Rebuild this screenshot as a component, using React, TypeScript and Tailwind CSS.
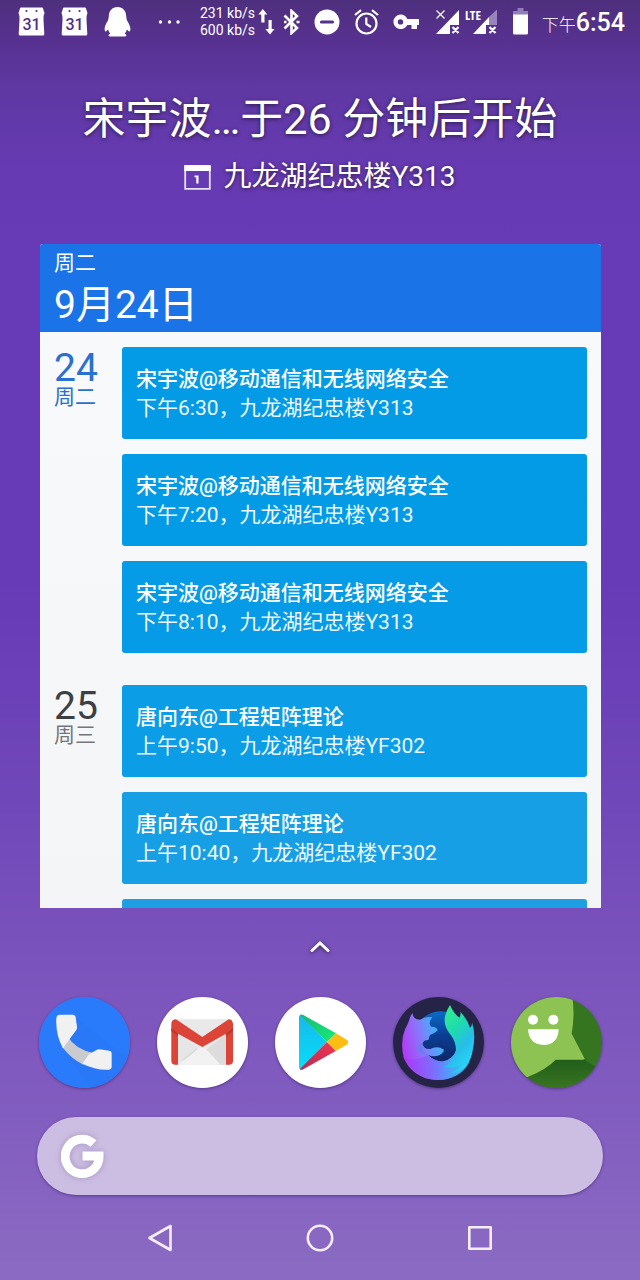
import React from "react";

type Event = { title?: string; detail?: string; color: string };
type Day = { day: string; weekday: string; dayColor: string; weekdayColor: string; events: Event[] };

const days: Day[] = [
  {
    day: "24",
    weekday: "周二",
    dayColor: "text-[#2a70cf]",
    weekdayColor: "text-[#2a70cf]",
    events: [
      { title: "宋宇波@移动通信和无线网络安全", detail: "下午6:30，九龙湖纪忠楼Y313", color: "bg-[#049be6]" },
      { title: "宋宇波@移动通信和无线网络安全", detail: "下午7:20，九龙湖纪忠楼Y313", color: "bg-[#049be6]" },
      { title: "宋宇波@移动通信和无线网络安全", detail: "下午8:10，九龙湖纪忠楼Y313", color: "bg-[#059be6]" },
    ],
  },
  {
    day: "25",
    weekday: "周三",
    dayColor: "text-[#3c4043]",
    weekdayColor: "text-[#757679]",
    events: [
      { title: "唐向东@工程矩阵理论", detail: "上午9:50，九龙湖纪忠楼YF302", color: "bg-[#0b9de6]" },
      { title: "唐向东@工程矩阵理论", detail: "上午10:40，九龙湖纪忠楼YF302", color: "bg-[#169fe4]" },
      { color: "bg-[#1f9fe3]" },
    ],
  },
];

function CalendarBadge() {
  return (
    <svg className="h-[29px] w-[27px]" viewBox="0 0 27 29" aria-hidden="true">
      <path
        d="M2 1.5Q2 .5 3 .5H24Q25 .5 25 1.5L26.500 6Q25 9 25.500 13L26.300 27Q26.300 28.500 25 28.500H2Q.7 28.500.7 27L1.500 13Q2 9 .5 6Z"
        fill="#fff"
      />
      <circle cx="8.500" cy="4" r="1.100" fill="#51308a" />
      <circle cx="18.500" cy="4" r="1.100" fill="#51308a" />
      <text x="13.500" y="22.500" textAnchor="middle" fontSize="16" fontWeight="500" fontFamily="Roboto, sans-serif" fill="#51308a">
        31
      </text>
    </svg>
  );
}

function StatusBar() {
  return (
    <header className="flex h-[45px] shrink-0 items-center justify-between pr-[15px] pb-[2px] pl-[18px]">
      <div className="flex items-center">
        <div className="flex items-center gap-4">
          <CalendarBadge />
          <CalendarBadge />
          <svg className="h-[30px] w-[27px]" viewBox="0 0 27 30" fill="#fff" aria-hidden="true">
            <path d="M13.500 0C8 0 5 4 4.800 9C4.700 11 4.300 12 4 13.500C2 16.500.6 19.500.6 22C.6 24 1.200 25 2.200 24.300L4.200 22.500C4.600 24.500 5.400 25.500 6.300 26.600C4.500 27.500 3.800 29.500 6 29.500H21C23.200 29.500 22.500 27.500 20.700 26.600C21.600 25.500 22.400 24.500 22.800 22.500L24.800 24.300C25.800 25 26.400 24 26.400 22C26.400 19.500 25 16.500 23 13.500C22.700 12 22.300 11 22.200 9C22 4 19 0 13.500 0Z" />
          </svg>
        </div>
        <svg className="ml-[27px] h-1 w-[22px]" viewBox="0 0 22 4" fill="#fff" aria-hidden="true">
          <circle cx="2.500" cy="2" r="1.700" />
          <circle cx="11.500" cy="2" r="1.700" />
          <circle cx="20" cy="2" r="1.700" />
        </svg>
        <div className="ml-5 text-[14px] leading-[17px] whitespace-nowrap">
          <p>231 kb/s</p>
          <p>600 kb/s</p>
        </div>
        <svg className="ml-[3px] h-[26px] w-[17px]" viewBox="0 0 17 26" fill="#fff" aria-hidden="true">
          <path d="M4.800 0L9.300 5.500H6.500V13.500H3.300V5.500H.3ZM12 25.500L7.300 20H10.500V11H13.700V20H16.500Z" />
        </svg>
      </div>
      <div className="flex items-center gap-[14px]">
        <svg className="h-[26px] w-[17px]" viewBox="0 0 17 26" fill="none" stroke="#fff" strokeWidth="2.600" aria-hidden="true">
          <path d="M1.500 6.500L14 19L8.500 24V2L14 7L1.500 19.500" />
          <path d="M13.500 13H16.500M1 13H3.500" />
        </svg>
        <svg className="h-[26px] w-[26px]" viewBox="0 0 26 26" aria-hidden="true">
          <circle cx="13" cy="13" r="12.500" fill="#fff" />
          <path d="M7.500 13H18.500" stroke="#55318d" strokeWidth="3.200" strokeLinecap="round" />
        </svg>
        <svg className="h-[26px] w-[25px]" viewBox="0 0 25 26" fill="none" stroke="#fff" strokeWidth="2.200" aria-hidden="true">
          <circle cx="12.500" cy="14.500" r="10" />
          <path d="M12.300 8.500V15L17 18M1 6L7 1.200M24 6L18 1.200" />
        </svg>
        <svg className="h-[26px] w-[27px]" viewBox="0 0 27 26" fill="#fff" fillRule="evenodd" aria-hidden="true">
          <path d="M7.500 5.500A7.300 7.300 0 0 1 14.300 10H26V16H24V20H18.500V16H14.300A7.300 7.300 0 1 1 7.500 5.500ZM7.500 10.200A2.700 2.700 0 1 0 7.500 15.600A2.700 2.700 0 1 0 7.500 10.200Z" />
        </svg>
        <svg className="h-[36px] w-[65px]" viewBox="435 4 65 36" aria-hidden="true">
          <path d="M437 34L460 10V25H451V34ZM474 34L490 17V25H487V34Z" fill="#fff" />
          <path d="M490 17L498 9.500V25H490Z" fill="#9883bd" />
          <path d="M437.500 10.500L445.500 18.500M445.500 10.500L437.500 18.500" stroke="#fff" strokeWidth="1.200" />
          <path d="M453.500 27L459.500 33M459.500 27L453.500 33M490.500 27L496.500 33M496.500 27L490.500 33" stroke="#fff" strokeWidth="2.200" />
          <text x="466" y="19.500" fontSize="13" fontWeight="700" fontFamily="'Open Sans Condensed', 'Roboto Condensed', 'Liberation Sans Narrow', Roboto, sans-serif" fill="#fff">
            LTE
          </text>
        </svg>
        <svg className="h-[27px] w-[15px]" viewBox="0 0 15 27" aria-hidden="true">
          <path d="M4.500 0H10.500V3H15V7H0V3H4.500Z" fill="#9180b5" />
          <path d="M0 6.500H15V25Q15 26.500 13.500 26.500H1.500Q0 26.500 0 25Z" fill="#fff" />
        </svg>
        <time className="flex items-baseline pt-1 whitespace-nowrap">
          <span className="text-[17px] leading-[30px] font-light">下午</span>
          <span className="text-[25px] leading-[30px] font-medium">6:54</span>
        </time>
      </div>
    </header>
  );
}

function Glance() {
  return (
    <section className="flex shrink-0 flex-col items-center gap-[10px] pt-[46px] pb-[47px] [text-shadow:0_1px_4px_rgba(0,0,0,0.6)]">
      <h1 className="text-[43px] leading-[56px] whitespace-nowrap">宋宇波…于26 分钟后开始</h1>
      <p className="flex items-center gap-3 text-[28px] leading-10">
        <svg className="h-[25px] w-[27px]" viewBox="0 0 27 25" aria-hidden="true">
          <path d="M1.200 1H25.800V23.800H1.200Z" fill="none" stroke="#e9e2f5" strokeWidth="1.800" />
          <path d="M.3.300H26.700V6H.3Z" fill="#fff" />
          <path d="M10.500 10.500H14.500V18.500H12.300V12.300H10.500Z" fill="#fff" />
        </svg>
        九龙湖纪忠楼Y313
      </p>
    </section>
  );
}

function Agenda() {
  return (
    <section className="mr-[39px] ml-10 flex min-h-0 flex-1 flex-col overflow-hidden rounded-t-[3px] bg-linear-to-b from-[#f8fafc] to-[#f4f5f7]">
      <div className="h-[88px] shrink-0 bg-[#1b73e8] px-[14px] pt-1">
        <p className="text-[21px] leading-[30px]">周二</p>
        <h2 className="text-[39px] leading-[54px]">9月24日</h2>
      </div>
      <div className="flex flex-col gap-8 px-[14px] py-[15px]">
        {days.map((d) => (
          <div key={d.day} className="flex">
            <div className="w-[68px] shrink-0 pt-1">
              <p className={`text-[39px] leading-[34px] ${d.dayColor}`}>{d.day}</p>
              <p className={`text-[21px] leading-6 ${d.weekdayColor}`}>{d.weekday}</p>
            </div>
            <ul className="flex min-w-0 flex-1 flex-col gap-[15px]">
              {d.events.map((e, i) => (
                <li key={i} className={`min-h-[92px] rounded-[3px] px-[14px] pt-[18px] pb-4 text-[21px] leading-[29px] whitespace-nowrap ${e.color}`}>
                  {e.title && <p className="font-medium">{e.title}</p>}
                  {e.detail && <p className="text-[#edf8fe]">{e.detail}</p>}
                </li>
              ))}
            </ul>
          </div>
        ))}
      </div>
    </section>
  );
}

function PhoneIcon() {
  return (
    <svg className="size-full" viewBox="27 37 273 273" aria-hidden="true">
      <circle cx="163.500" cy="173.500" r="136.500" fill="#2a7bfb" />
      <path d="M139 100L290 220A136 136 0 0 1 180 309L110 210Z" fill="#2472ee" opacity=".3" />
      <path d="M112 155Q137 195 190 205L160 240Q125 224 97 188Z" fill="#c9cbcf" />
      <path d="M90 90H128Q136 90 137 98L141 127Q142 131 139 136L119 163L99 191Q76 150 79 100Q80 90 90 90Z" fill="#f1f1f2" />
      <path d="M177 209L200 196Q204 193 209 194L238 198Q245 199 245 206V246Q245 255 235 255Q198 257 157 237Z" fill="#f1f1f2" />
    </svg>
  );
}

function MailIcon() {
  return (
    <svg className="size-full" viewBox="381 37 273 273" aria-hidden="true">
      <circle cx="517.500" cy="173.500" r="136.500" fill="#fff" />
      <path d="M436 104H598Q609 106 609 118V228Q609 240 597 240H436Q424 240 424 228V118Q424 106 436 104Z" fill="#e9e9e9" />
      <path d="M444 148L517 204L589 148V240H560L517 190L475 240L444 215Z" fill="#dcdcdc" />
      <path d="M444 150L500 189L444 235Z" fill="#e6e6e6" />
      <path d="M446 240L508 190H525L572 240Z" fill="#f2f2f2" />
      <path d="M424 117V228Q424 240 436 240H444V147L517 187L588 147V240H597Q609 240 609 228V117Q607 104 596 104L517 157L438 104Q425 104 424 117Z" fill="#dc4438" />
      <path d="M424 130L444 147V155L424 139ZM609 130L588 147V155L609 139Z" fill="#bd362f" />
    </svg>
  );
}

function PlayIcon() {
  return (
    <svg className="size-full" viewBox="30 217 273 273" aria-hidden="true">
      <defs>
        <linearGradient id="play-blue" x1="0" y1="0" x2="0" y2="1">
          <stop offset="0" stopColor="#18b8e8" />
          <stop offset="1" stopColor="#05dffb" />
        </linearGradient>
        <linearGradient id="play-red" x1="1" y1="0" x2="0" y2="1">
          <stop offset="0" stopColor="#f4364e" />
          <stop offset="1" stopColor="#b52a55" />
        </linearGradient>
        <linearGradient id="play-green" x1="0" y1="0" x2="1" y2="1">
          <stop offset="0" stopColor="#1fb57b" />
          <stop offset="1" stopColor="#15ed76" />
        </linearGradient>
      </defs>
      <circle cx="166.500" cy="353.500" r="136.500" fill="#fff" />
      <path d="M106 270L186 352L106 435Q102 432 102 427V277Q102 272 106 270Z" fill="url(#play-blue)" />
      <path d="M104 271Q109 268 115 271L213 326L186 352Z" fill="url(#play-green)" />
      <path d="M104 434Q109 437 115 434L212 379L186 352Z" fill="url(#play-red)" />
      <path d="M213 326L245 345Q254 353 245 360L212 379L186 352Z" fill="#fdbd12" />
    </svg>
  );
}

function FirefoxIcon() {
  return (
    <svg className="size-full" viewBox="39 36 273 273" aria-hidden="true">
      <defs>
        <linearGradient id="fox-body" x1="0" y1=".65" x2="1" y2=".4">
          <stop offset="0" stopColor="#b833f5" />
          <stop offset=".28" stopColor="#8f70fa" />
          <stop offset=".5" stopColor="#4fa6fb" />
          <stop offset="1" stopColor="#12d8e8" />
        </linearGradient>
        <linearGradient id="fox-tail" x1=".2" y1="0" x2=".7" y2="1">
          <stop offset="0" stopColor="#35ec8e" />
          <stop offset=".35" stopColor="#1edbae" />
          <stop offset=".65" stopColor="#28bde9" />
          <stop offset="1" stopColor="#26dcfa" />
        </linearGradient>
        <linearGradient id="fox-low" x1="0" y1="0" x2="1" y2="0">
          <stop offset="0" stopColor="#a637fa" />
          <stop offset=".5" stopColor="#7b69ff" />
          <stop offset="1" stopColor="#21d9fb" />
        </linearGradient>
        <linearGradient id="fox-globe" x1="0" y1="0" x2="0" y2="1">
          <stop offset="0" stopColor="#0a6cc8" />
          <stop offset=".45" stopColor="#0b3e94" />
          <stop offset="1" stopColor="#10245f" />
        </linearGradient>
      </defs>
      <circle cx="175.500" cy="172.500" r="136.500" fill="#252447" />
      <circle cx="182" cy="158" r="79" fill="url(#fox-globe)" />
      <path d="M97 84Q99 98 110 103L120 104Q134 94 157 97Q148 107 149 116L153 125Q170 124 173 136Q164 146 150 150L145 165Q128 165 128 178Q132 194 151 192Q171 181 192 194Q191 203 179 210Q162 218 144 210Q166 231 190 229Q220 222 229 195L278 175Q278 234 238 265Q201 291 151 283Q93 270 71 218Q60 170 75 133Q84 115 87 107Q90 94 97 84Z" fill="url(#fox-body)" />
      <path d="M71 215Q92 235 143 211Q167 232 192 229Q222 223 230 190L268 232Q245 276 190 285Q113 290 71 215Z" fill="url(#fox-low)" opacity=".7" />
      <path d="M210 60Q221 86 238 98Q243 92 241 80Q264 106 270 128Q277 123 276 112Q288 150 279 190Q276 219 261 239Q249 257 207 266Q241 252 249 234Q226 253 190 247Q222 231 228 198Q228 171 213 151Q186 118 197 88Q201 74 210 60Z" fill="url(#fox-tail)" />
      <path d="M127 172Q119 198 143 211Q128 212 114 196Q112 180 127 172Z" fill="#6180ed" />
    </svg>
  );
}

function MessageIcon() {
  return (
    <svg className="size-full" viewBox="393 37 273 273" aria-hidden="true">
      <defs>
        <clipPath id="sms-disc">
          <circle cx="529.500" cy="173.500" r="136.500" />
        </clipPath>
        <linearGradient id="sms-shade" x1="0" y1="0" x2="0" y2="1">
          <stop offset="0" stopColor="#205e1b" />
          <stop offset="1" stopColor="#3a7520" />
        </linearGradient>
      </defs>
      <g clipPath="url(#sms-disc)">
        <path d="M393 37H666V310H393Z" fill="#36751f" />
        <path d="M440 280L528 225H614L666 260V310H440Z" fill="url(#sms-shade)" />
        <path d="M393 37H577Q585 90 575 147L614 222Q612 225 606 225H527Q500 254 443 277L393 290Z" fill="#8dc353" />
      </g>
      <circle cx="459" cy="105" r="15" fill="#fff" />
      <circle cx="520" cy="105" r="15" fill="#fff" />
      <path d="M444 134H536Q534 181 490 181Q447 179 444 134Z" fill="#fff" />
    </svg>
  );
}

const apps = [
  { name: "电话", Icon: PhoneIcon },
  { name: "Gmail", Icon: MailIcon },
  { name: "Play 商店", Icon: PlayIcon },
  { name: "Firefox", Icon: FirefoxIcon },
  { name: "短信", Icon: MessageIcon },
];

function Dock() {
  return (
    <nav aria-label="常用应用" className="flex shrink-0 justify-between pr-[38px] pl-[39px]">
      {apps.map(({ name, Icon }) => (
        <button key={name} type="button" aria-label={name} className="size-[91px] rounded-full shadow-[0_1px_3px_rgba(40,20,80,0.5)]">
          <Icon />
        </button>
      ))}
    </nav>
  );
}

function SearchBar() {
  return (
    <form role="search" className="mx-[37px] mt-[29px] flex h-[78px] shrink-0 items-center gap-4 rounded-full bg-[#ccbee2] px-6 shadow-[0_1px_3px_rgba(50,25,100,0.55)]">
      <svg className="h-[44px] w-[43px] shrink-0 drop-shadow-[0_0_3px_rgba(90,70,140,0.35)]" viewBox="0 0 43 44" fill="none" stroke="#fff" strokeWidth="8.800" aria-hidden="true">
        <path d="M32.500 9.500A17 17.300 0 1 0 38.200 22H21.500" />
      </svg>
      <input type="search" aria-label="搜索" className="h-full min-w-0 flex-1 bg-transparent text-[24px] text-white outline-none" />
    </form>
  );
}

function NavigationBar() {
  return (
    <nav aria-label="系统导航" className="flex h-[85px] shrink-0 items-center justify-center gap-[130px]">
      <button type="button" aria-label="返回">
        <svg className="size-[30px]" viewBox="0 0 30 30" fill="none" stroke="#f5edfc" strokeWidth="2.600" strokeLinejoin="round" aria-hidden="true">
          <path d="M25.500 3V27L4.500 15Z" />
        </svg>
      </button>
      <button type="button" aria-label="主屏幕">
        <svg className="size-[30px]" viewBox="0 0 30 30" fill="none" stroke="#f5edfc" strokeWidth="2.600" aria-hidden="true">
          <circle cx="15" cy="15" r="12.200" />
        </svg>
      </button>
      <button type="button" aria-label="最近任务">
        <svg className="size-[30px]" viewBox="0 0 30 30" fill="none" stroke="#f5edfc" strokeWidth="2.600" strokeLinejoin="round" aria-hidden="true">
          <path d="M4.300 4.300H25.700V25.700H4.300Z" />
        </svg>
      </button>
    </nav>
  );
}

export default function App() {
  return (
    <main
      lang="zh-CN"
      className="flex h-screen flex-col overflow-hidden bg-[linear-gradient(180deg,#4e2f7d_0%,#57318f_3%,#5f38a3_7%,#663ab2_13%,#673ab7_20%,#673ab7_45%,#7047b9_62%,#7a52bc_74%,#825dc0_87%,#8b6bc2_100%)] font-['Roboto','Noto_Sans_CJK_SC',sans-serif] text-white"
    >
      <StatusBar />
      <Glance />
      <Agenda />
      <button type="button" aria-label="展开应用列表" className="flex h-[89px] shrink-0 items-start justify-center pt-[31px]">
        <svg className="h-4 w-6 drop-shadow-[0_1px_2px_rgba(0,0,0,0.6)]" viewBox="0 0 24 16" fill="none" stroke="#fff" strokeWidth="3" strokeLinecap="round" aria-hidden="true">
          <path d="M4 11.500L12 4L20 11.500" />
        </svg>
      </button>
      <Dock />
      <SearchBar />
      <NavigationBar />
    </main>
  );
}
